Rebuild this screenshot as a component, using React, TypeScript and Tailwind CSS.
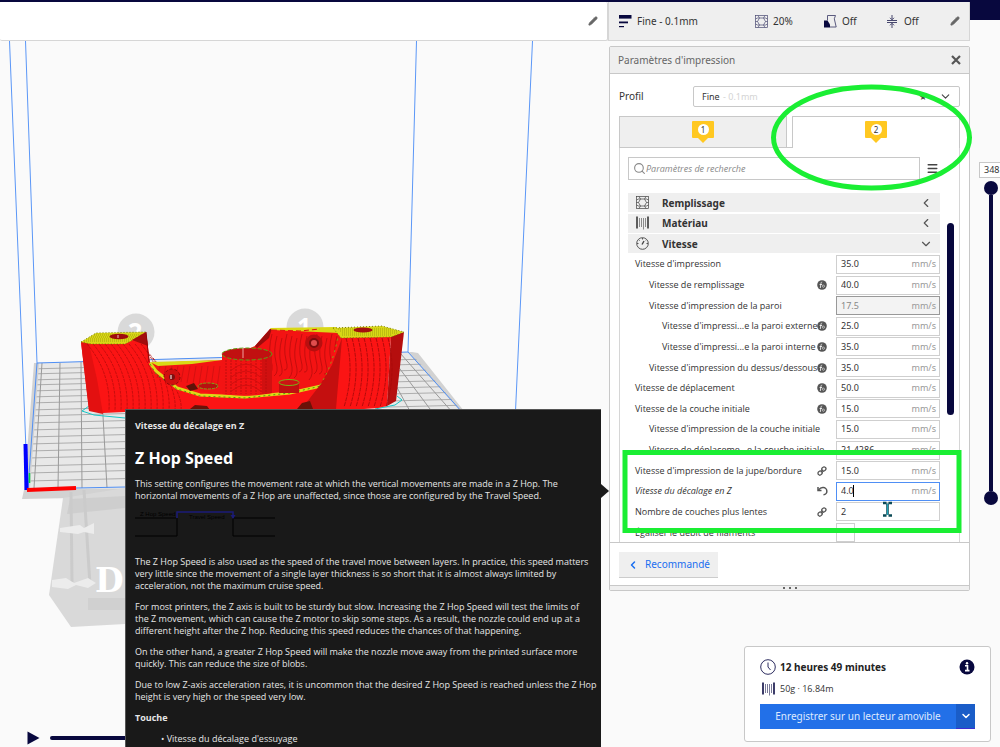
import type { ReactNode } from "react";
import { ChevronDown, ChevronLeft, Menu, Pencil, Search } from "lucide-react";

type Setting = {
  label: string;
  value: string;
  level?: number;
  icon?: "fx" | "link" | "reset";
  unit?: string;
  disabled?: boolean;
  active?: boolean;
};

const settings: Setting[] = [
  { label: "Vitesse d'impression", value: "35.0", unit: "mm/s" },
  { label: "Vitesse de remplissage", value: "40.0", unit: "mm/s", level: 1, icon: "fx" },
  { label: "Vitesse d'impression de la paroi", value: "17.5", unit: "mm/s", level: 1, disabled: true },
  { label: "Vitesse d'impressi...e la paroi externe", value: "25.0", unit: "mm/s", level: 2, icon: "fx" },
  { label: "Vitesse d'impressi...e la paroi interne", value: "35.0", unit: "mm/s", level: 2, icon: "fx" },
  { label: "Vitesse d'impression du dessus/dessous", value: "35.0", unit: "mm/s", level: 1, icon: "fx" },
  { label: "Vitesse de déplacement", value: "50.0", unit: "mm/s", icon: "fx" },
  { label: "Vitesse de la couche initiale", value: "15.0", unit: "mm/s", icon: "fx" },
  { label: "Vitesse d'impression de la couche initiale", value: "15.0", unit: "mm/s", level: 1 },
  { label: "Vitesse de déplaceme...e la couche initiale", value: "21.4286", unit: "mm/s", level: 1 },
  { label: "Vitesse d'impression de la jupe/bordure", value: "15.0", unit: "mm/s", icon: "link" },
  { label: "Vitesse du décalage en Z", value: "4.0", unit: "mm/s", icon: "reset", active: true },
  { label: "Nombre de couches plus lentes", value: "2", icon: "link" },
];

const indents = ["pl-[7px]", "pl-[21px]", "pl-[34px]"];

function InfillIcon() {
  return (
    <svg width="13" height="13" viewBox="0 0 13 13" fill="none" stroke="currentColor" strokeWidth="0.7">
      <rect x="0.5" y="0.5" width="12" height="12" />
      <path d="M4.500 3h4L10.500 6.500 8.500 10h-4L2.500 6.500zM4.500 3L3 .5M8.500 3L10 .5M4.500 10L3 12.500M8.500 10l1.500 2.500M.5 4l2-1 2 0M12.500 4l-2-1h-2M.5 9l2 1h2M12.500 9l-2 1h-2M2.500 6.500H.5M10.500 6.500h2" />
    </svg>
  );
}

function SpoolIcon() {
  return (
    <svg width="13" height="14" viewBox="0 0 13 14" fill="none" stroke="currentColor">
      <path d="M1 0.500v12M12 0.500v12" strokeWidth="1.700" />
      <path d="M3.500 2v9M5.500 2v9M7.500 2v11.500M9.500 2v9" strokeWidth="0.900" opacity="0.650" />
    </svg>
  );
}

function GaugeIcon() {
  return (
    <svg width="13" height="13" viewBox="0 0 13 13" fill="none" stroke="currentColor" strokeWidth="0.9">
      <circle cx="6.500" cy="6.500" r="5.800" />
      <path d="M6.500 1v1.500M1 6.500h1.500M12 6.500h-1.500M2.800 2.800l.8.8M10.200 2.800l-.5.5" />
      <path d="M6 7.500L8 4" strokeWidth="1.400" />
    </svg>
  );
}

function LayersIcon() {
  return (
    <svg width="13" height="13" viewBox="0 0 13 13" fill="#08083e">
      <rect width="12.500" height="3.600" />
      <rect y="6.500" width="9" height="1.800" />
      <rect y="11" width="5" height="1.200" />
    </svg>
  );
}

function SupportIcon() {
  return (
    <svg width="13" height="13" viewBox="0 0 13 13">
      <path d="M0 5.500h3.500l2.500 4v3H0z" fill="#08083e" />
      <path d="M3.500 5.500V.5h8L10.300 3.800l1.900 8.200H6" fill="none" stroke="#4a4a72" strokeWidth="0.900" />
    </svg>
  );
}

function AdhesionIcon() {
  return (
    <svg width="12" height="13" viewBox="0 0 12 13" fill="none" stroke="#33335f" strokeWidth="0.9">
      <path d="M1 5.500h10M1 7.500h10M6 0v4.500M6 13V8.500M4 2.800l2 2 2-2M4 10.300l2-2 2 2" />
    </svg>
  );
}

function FxIcon() {
  return (
    <svg width="10" height="10" viewBox="0 0 10 10" fill="none">
      <circle cx="5" cy="5" r="4.800" fill="#555" />
      <path d="M5.200 2c-1 0-1.200.8-1.300 1.800L3.300 8M2.600 4.500h2.500" stroke="#fff" strokeWidth="0.800" />
      <circle cx="6.400" cy="6.200" r="1.100" stroke="#ddd" strokeWidth="0.700" />
    </svg>
  );
}

function LinkIcon() {
  return (
    <svg width="10" height="10" viewBox="0 0 10 10" fill="none" stroke="#555" strokeWidth="1.300">
      <rect x="5" y="0.800" width="3.600" height="4.400" rx="1.700" transform="rotate(45 6.800 3)" />
      <rect x="1.300" y="4.800" width="3.600" height="4.400" rx="1.700" transform="rotate(45 3.100 7)" />
      <path d="M3.800 6.200l2.400-2.400" />
    </svg>
  );
}

function ResetIcon() {
  return (
    <svg width="11" height="10" viewBox="0 0 11 10" fill="none" stroke="#555" strokeWidth="1.500">
      <path d="M1 1v3.500h3.500" />
      <path d="M1.500 4Q3.500 1.500 6 1.600A3.600 3.600 0 0 1 6.500 8.800" />
    </svg>
  );
}

function Extruder({ n }: { n: number }) {
  return (
    <span className="flex flex-col items-center">
      <span className="flex h-[17px] w-[22px] items-center justify-center rounded-[1px] bg-[#ffc821]">
        <span className="flex size-[11px] items-center justify-center rounded-full bg-white text-[8px] leading-[11px] text-[#333]">
          {n}
        </span>
      </span>
      <svg width="10" height="5" viewBox="0 0 10 5">
        <path d="M0 0h10L5 5z" fill="#ffc821" />
      </svg>
    </span>
  );
}

function Category({ icon, title, open }: { icon: ReactNode; title: string; open?: boolean }) {
  return (
    <button className="flex h-[19px] w-full shrink-0 items-center bg-[#efefef] pr-[7px] pl-2 text-[#444]">
      {icon}
      <span className="ml-[13px] flex-1 text-left text-[10px] font-bold text-[#333]">{title}</span>
      {open ? <ChevronDown size={14} color="#555" /> : <ChevronLeft size={14} color="#555" />}
    </button>
  );
}

function SettingRow({ s, id }: { s: Setting; id: string }) {
  const box = s.active
    ? "border-[#4f8ff5] bg-white"
    : s.disabled
      ? "border-[#999] bg-[#f3f3f3]"
      : "border-[#cfcfcf] bg-white";
  return (
    <div className={`flex h-[19px] shrink-0 items-center ${indents[s.level ?? 0]}`}>
      <label
        htmlFor={id}
        className={`w-0 flex-1 font-['Open_Sans',sans-serif] whitespace-nowrap text-[#333] ${s.active ? "italic" : ""}`}
      >
        {s.label}
      </label>
      <span className="mr-2 flex w-[12px] justify-center">
        {s.icon === "fx" && <FxIcon />}
        {s.icon === "link" && <LinkIcon />}
        {s.icon === "reset" && <ResetIcon />}
      </span>
      <span className={`relative flex h-[19px] w-[104px] shrink-0 items-center border pr-[3px] pl-1 ${box}`}>
        <input
          id={id}
          defaultValue={s.value}
          disabled={s.disabled}
          className={`w-0 min-w-0 flex-1 bg-transparent outline-none ${s.disabled ? "text-[#888]" : "text-[#333]"}`}
        />
        <span className="text-[#999]">{s.unit}</span>
        {s.active && <span className="absolute left-4 h-3 w-px bg-black" />}
      </span>
    </div>
  );
}

// Perspective build plate with the sliced parts on it
function Scene() {
  const rows = [369, 374, 380, 385, 391, 397, 403, 410, 416, 423, 430, 437, 444, 451, 458, 466, 473, 481];
  return (
    <svg className="absolute top-0 left-0" width="608" height="747" viewBox="0 0 608 747" fill="none">
      <clipPath id="plate">
        <path d="M39 363L410 352l50 57v76L30 489z" />
      </clipPath>
      <path d="M34 363L412 352l6 1 46 58v80l-340 6-102 2 2-9z" fill="#d2d2d2" />
      <path d="M39 363L408 352l52 59v76L30 489z" fill="#e8e8e8" />
      <path d="M63 498L49 595l22 32 54-3V488z" fill="#d9d9d9" />
      <path d="M70 499l55-3v12l-58 6z" fill="#cecece" />
      <path d="M71 492l1 90M84 490l6 95" stroke="#cbcbcb" strokeWidth="3" />
      <path d="M88 598h37v12H88z" fill="#d0d0d0" />
      <path d="M60 528l20-3 4 3 10-5v11l-10-2-6 2-18-2zM52 580l14-2 8 5 14-5 8 5-8 5-12-3-8 4-16-2z" fill="#ececec" />
      <text x="95" y="592" fill="#fff" fontFamily="DejaVu Serif" fontWeight="bold" fontSize="33">
        D
      </text>

      <g clipPath="url(#plate)">
        {rows.map((y) => (
          <path key={y} d={`M28 ${y}L470 ${y - 11}`} stroke="#a6a6a6" strokeWidth="0.9" />
        ))}
        <path
          d="M42 363L34 488M60 363L58 488M81 362l1 126M100 362l7 126M378 353l33 60M388 353l45 60M400 353l53 60"
          stroke="#999"
        />
      </g>
      <path d="M37 363L408 352l54 60M37 363L28 489l97-2" stroke="#4f8ff5" />
      <path d="M9.500 41L20 300l6 150M25.500 41l11.500 322M416.500 41l-8.500 311M532.500 41L515.500 411" stroke="#5b97f7" />
      <path d="M25.500 444l1 46" stroke="#00f" strokeWidth="4" />
      <path d="M29.500 473v10" stroke="#00d23c" strokeWidth="1.500" />
      <path d="M27 490l49-2" stroke="red" strokeWidth="4" />

      <g fill="#d9d9d9" fontFamily="Noto Sans" fontWeight="bold" fontSize="25">
        <circle cx="136" cy="332" r="18.500" />
        <text x="128" y="341" fill="#fff">
          2
        </text>
        <circle cx="305" cy="327" r="18.500" />
        <text x="297" y="336" fill="#fff">
          1
        </text>
      </g>

      <path d="M89 406l-7 5 12 4 31 3M375 409l20-4 7-5-5-4" stroke="#19c5c5" />

      {/* left part */}
      <path d="M81 342L146 333l4 29 9 12 30 15 50 6 60-6 36-5v27H125v1l-22 1-14-3z" fill="#fb1414" />
      <path d="M81 342l8 69 14 3-6-35-8-35z" fill="#e31010" />
      {Array.from({ length: 13 }, (_, i) => (
        <path
          key={i}
          d={`M${87 + i * 6} ${344 + (i > 9 ? (i - 9) * 7 : 0)}q${24} 28 ${22} ${66 - (i > 9 ? (i - 9) * 7 : 0)}`}
          stroke="#b50b0b"
          strokeWidth="0.8"
          strokeDasharray="3 1"
        />
      ))}
      <path d="M81 342l15-9 50-1-13 8-8 4H91z" fill="#d8d616" />
      <path d="M84 341h45M88 339h45M91 337h45M94 335h48" stroke="#a3a30c" strokeDasharray="1 1" />
      <path d="M81 342l15-9 50-1-13 8-8 4H91z" stroke="#7a7d0a" strokeDasharray="1 2" />
      <ellipse cx="119" cy="336.500" rx="9.500" ry="2.800" fill="#a00c0c" />
      <path d="M118 335v3" stroke="#f3c0c0" />
      <path d="M132 340l14-8 2 14z" fill="#a30d0d" />
      <path d="M146 332l3 30" stroke="#8e0b0b" />

      {/* middle body */}
      <path d="M150 363l72-3 33-14 15-17h70v48l-20 10-60 7-50-1-32-6-24-14z" fill="#f31313" />
      <path d="M255 346l15-17 2-1-3 10-12 10z" fill="#9c0c0c" />
      {Array.from({ length: 14 }, (_, i) => (
        <path
          key={i}
          d={`M${272 + i * 5} ${334 + (i % 3) * 2}q-4 15 ${-1} 26t-2 ${16 - (i % 4) * 2}`}
          stroke="#b80d0d"
          strokeWidth="0.8"
        />
      ))}
      {Array.from({ length: 11 }, (_, i) => (
        <path key={i} d={`M${160 + i * 6} ${366}l${-3} ${12 + i}`} stroke="#c51010" strokeWidth="0.7" />
      ))}
      <path d="M150 362l72-2-30 4-34 2z" fill="#d9d816" />
      <path d="M150 363l6 8 21 17 23 7 45 2 45-4 31-7" stroke="#ded917" strokeWidth="3" />
      <path d="M150 364l6 10 21 15 23 7 45 2 45-5 31-7" stroke="#4f9a12" strokeDasharray="2 3" />
      <path d="M270 328l66-1 3 6-67-3z" fill="#d9d816" />
      <path d="M272 330l28 1 20-2" stroke="#d11" strokeDasharray="5 3" />
      <circle cx="172" cy="377" r="8" fill="#d10f0f" stroke="#8c0a0a" strokeDasharray="3 2" />
      <circle cx="172" cy="377" r="3" fill="#7d1010" />
      <path d="M171 375v4" stroke="#fff" />
      <ellipse cx="208" cy="386" rx="10" ry="3" fill="#b81010" stroke="#79a814" strokeDasharray="3 1" />
      <path d="M186 386l8-3 4 6-8 2z" fill="#5e1208" />
      <path d="M279 382v11h20v-11z" fill="#bf1010" />
      <ellipse cx="289" cy="382.500" rx="10" ry="3" fill="#cd1313" stroke="#79b414" />
      <circle cx="314" cy="343" r="8.500" fill="#b80f0f" />
      <circle cx="314" cy="343" r="4" fill="#e04d4d" stroke="#7c0c0c" strokeWidth="2" />

      {/* cylinder */}
      <path d="M222 354v40q25 4 50-1v-39z" fill="#f21313" />
      <path d="M262 358v36l10-1v-39z" fill="#d11010" />
      {Array.from({ length: 9 }, (_, i) => (
        <path key={i} d={`M${226 + i * 5} 360V394`} stroke="#b30c0c" strokeWidth="0.8" strokeDasharray="2 1" />
      ))}
      {[366, 373, 380, 387].map((y) => (
        <path key={y} d={`M230 ${y + 5}q16 -14 32 0`} stroke="#c90e0e" strokeWidth="0.8" />
      ))}
      <ellipse cx="247" cy="354" rx="25" ry="6" fill="#c11010" stroke="#5aa312" strokeDasharray="4 2" />
      <path d="M243 348v10" stroke="#f0a0a0" />

      {/* right part */}
      <path d="M340 337l51-1-4 70-9 2-42 3h-39l25-26z" fill="#fb1414" />
      <path d="M342 338l-6 71-36 2 20-26 12-20z" fill="#c40f0f" />
      <path d="M391 336l13-4-8 69-9 5z" fill="#b50e0e" />
      {Array.from({ length: 8 }, (_, i) => (
        <path
          key={i}
          d={`M${346 + i * 6} 338q9 34 ${-2} 69`}
          stroke="#a80a0a"
          strokeWidth="0.9"
          strokeDasharray="4 1"
        />
      ))}
      <path d="M320 385q12-18 18-48" stroke="#88a915" strokeDasharray="2 4" />
      <path d="M333 328l49-2 22 6-13 5-50 1z" fill="#d8d616" />
      <path d="M338 329h54M340 331h58M342 333h56M342 335h50" stroke="#a3a30c" strokeDasharray="1 1" />
      <path d="M333 328l49-2 22 6-13 5-50 1z" stroke="#7a7d0a" strokeDasharray="1 2" />
      <ellipse cx="363" cy="330" rx="9.500" ry="2.500" fill="#a40e0e" />
      <path d="M190 409l5-4 12 1 3 4zM297 409l5-6 8-2 3 8z" fill="#6a1208" />
    </svg>
  );
}

function Tooltip() {
  return (
    <div
      role="tooltip"
      className="absolute top-[409px] bottom-0 left-[125px] z-20 w-[476px] border-t border-l border-[#555] bg-[#191919] pt-2.5 pl-[9px] font-['Open_Sans',sans-serif] text-[9px] leading-3 text-[#e6e6e6]"
    >
      <svg className="absolute top-[74px] -right-2" width="8" height="14" viewBox="0 0 8 14">
        <path d="M0 0l8 7-8 7z" fill="#191919" />
      </svg>
      <p className="font-bold">Vitesse du décalage en Z</p>
      <h1 className="mt-3.5 font-['Noto_Sans',sans-serif] text-[16px] leading-6 font-bold text-white">Z Hop Speed</h1>
      <p className="mt-2">
        This setting configures the movement rate at which the vertical movements are made in a Z Hop. The
        <br />
        horizontal movements of a Z Hop are unaffected, since those are configured by the Travel Speed.
      </p>
      <svg className="mt-2" width="140" height="46" viewBox="0 0 140 46" fill="none">
        <path d="M0 8h41M0 26h42V8M98 8h42M98 8v18h42" stroke="#000" />
        <path d="M42 8V2h56v6" stroke="#1b1b78" strokeWidth="1.500" />
        <path d="M95.500 5h5L98 9z" fill="#1b1b78" />
        <g fill="#000" fontFamily="Liberation Sans" fontSize="6">
          <text x="5" y="6">
            Z Hop Speed
          </text>
          <text x="54" y="9">
            Travel Speed
          </text>
        </g>
      </svg>
      <div className="flex flex-col gap-[9px]">
        <p>
          The Z Hop Speed is also used as the speed of the travel move between layers. In practice, this speed matters
          <br />
          very little since the movement of a single layer thickness is so short that it is almost always limited by
          <br />
          acceleration, not the maximum cruise speed.
        </p>
        <p>
          For most printers, the Z axis is built to be sturdy but slow. Increasing the Z Hop Speed will test the limits of
          <br />
          the Z movement, which can cause the Z motor to skip some steps. As a result, the nozzle could end up at a
          <br />
          different height after the Z hop. Reducing this speed reduces the chances of that happening.
        </p>
        <p>
          On the other hand, a greater Z Hop Speed will make the nozzle move away from the printed surface more
          <br />
          quickly. This can reduce the size of blobs.
        </p>
        <p>
          Due to low Z-axis acceleration rates, it is uncommon that the desired Z Hop Speed is reached unless the Z Hop
          <br />
          height is very high or the speed very low.
        </p>
        <p className="font-bold">Touche</p>
        <ul className="pl-[26px]">
          <li>• Vitesse du décalage d'essuyage</li>
        </ul>
      </div>
    </div>
  );
}

function PrintSettings() {
  return (
    <section className="mt-[5px] ml-px rounded-[2px] border border-[#c8c8c8] bg-white">
      <header className="flex h-[27px] items-center justify-between border-b border-[#c8c8c8] bg-[#efefef] pr-2 pl-2">
        <h2 className="text-[10px] text-[#666]">Paramètres d'impression</h2>
        <button aria-label="Fermer">
          <svg width="10" height="10" viewBox="0 0 10 10" stroke="#555" strokeWidth="2.200">
            <path d="M1 1l8 8M9 1L1 9" />
          </svg>
        </button>
      </header>

      <div className="px-[9px] pt-3">
        <div className="flex h-[21px] items-center">
          <label htmlFor="profile" className="w-[74px] text-[10px] text-[#333]">
            Profil
          </label>
          <div className="relative flex h-[21px] flex-1 items-center rounded-[2px] border border-[#c8c8c8]">
            <select id="profile" className="h-full w-full appearance-none bg-transparent pl-2 text-[9px] text-[#333] outline-none">
              <option>Fine</option>
            </select>
            <span className="pointer-events-none absolute left-[29px] text-[9px] text-[#d4d4d4]">- 0.1mm</span>
            <span className="pointer-events-none absolute right-[7px] flex items-center gap-3 text-[#444]">
              <span className="text-[9px]">★</span>
              <ChevronDown size={13} />
            </span>
          </div>
        </div>

        <div className="mt-[9px] flex h-8">
          <button aria-label="Extrudeuse 1" className="flex flex-1 justify-center border border-[#c8c8c8] bg-[#efefef] pt-1">
            <Extruder n={1} />
          </button>
          <span className="w-[5px] border-b border-[#c8c8c8]" />
          <button aria-label="Extrudeuse 2" className="flex flex-1 justify-center border border-b-0 border-[#c8c8c8] pt-1">
            <Extruder n={2} />
          </button>
        </div>

        <div className="border-x border-[#d6d6d6] pt-[9px] pl-2">
          <div className="flex items-center">
            <label className="flex h-[23px] w-[292px] items-center border border-[#c8c8c8] pl-1">
              <Search size={13} strokeWidth={2} color="#888" />
              <input
                placeholder="Paramètres de recherche"
                aria-label="Paramètres de recherche"
                className="flex-1 font-['Open_Sans',sans-serif] text-[9px] italic outline-none placeholder:text-[#888]"
              />
            </label>
            <button aria-label="Menu" className="ml-1.5">
              <Menu size={13} strokeWidth={2.500} color="#444" />
            </button>
          </div>

          <div className="mt-[13px] flex">
            <div className="flex h-[349px] w-[312px] flex-col justify-between overflow-hidden text-[9px] leading-3">
              <Category icon={<InfillIcon />} title="Remplissage" />
              <Category icon={<SpoolIcon />} title="Matériau" />
              <Category icon={<GaugeIcon />} title="Vitesse" open />
              {settings.map((s, i) => (
                <SettingRow key={s.label} s={s} id={`setting-${i}`} />
              ))}
              <div className="flex h-[19px] shrink-0 items-center pl-[7px]">
                <label htmlFor="equalize" className="flex-1 font-['Open_Sans',sans-serif] text-[#333]">
                  Égaliser le débit de filaments
                </label>
                <span className="w-[104px]">
                  <input id="equalize" type="checkbox" className="block size-[19px] appearance-none border border-[#cfcfcf]" />
                </span>
              </div>
            </div>
            <div className="mt-[30px] ml-[7px] h-[192px] w-[7px] rounded-full bg-[#08083e]" />
          </div>
        </div>
      </div>

      <footer className="border-t border-[#c8c8c8] px-[9px] pt-[9px] pb-[7px]">
        <button className="flex h-[26px] w-[99px] items-center gap-1.5 border-b border-[#ccc] bg-[#efefef] pl-2 text-[10px] text-[#196ef0]">
          <ChevronLeft size={12} strokeWidth={3} />
          Recommandé
        </button>
      </footer>
      <div className="flex h-[5px] items-center justify-center gap-1 border-t border-[#c8c8c8] bg-[#efefef]">
        <span className="size-[2px] bg-[#666]" />
        <span className="size-[2px] bg-[#666]" />
        <span className="size-[2px] bg-[#666]" />
      </div>
    </section>
  );
}

function JobCard() {
  return (
    <section className="mt-auto mr-[9px] mb-[5px] flex w-[247px] flex-col self-end rounded-[3px] border border-[#c8c8c8] bg-white px-[15px] pt-3 pb-3">
      <div className="flex items-center">
        <svg width="16" height="16" viewBox="0 0 16 16" fill="none" stroke="#2d2d60">
          <circle cx="8" cy="8" r="7.300" />
          <path d="M8 3.500V8l2.500 3" />
        </svg>
        <span className="ml-1 flex-1 text-[10px] leading-4 font-bold text-[#222]">12 heures 49 minutes</span>
        <svg width="16" height="16" viewBox="0 0 16 16" fill="none">
          <circle cx="8" cy="8" r="7.500" fill="#08083e" />
          <path d="M6 6.800h2.500v4.500M6 11.600h4.500" stroke="#fff" strokeWidth="1.600" />
          <circle cx="8" cy="4.200" r="1.200" fill="#fff" />
        </svg>
      </div>
      <div className="mt-1.5 flex items-center gap-[5px] pl-[2px] font-['Open_Sans',sans-serif] text-[9px] leading-4 text-[#333]">
        <span className="text-[#1c1c50]">
          <SpoolIcon />
        </span>
        50g · 16.84m
      </div>
      <div className="mt-[7px] flex h-[25px] text-[10px] text-[#dfeaff]">
        <button className="flex-1 bg-[#2270e8]">Enregistrer sur un lecteur amovible</button>
        <button aria-label="Autres options" className="flex w-[19px] items-center justify-center border-b border-[#3d2fd0] bg-[#1a5dc8]">
          <ChevronDown size={12} strokeWidth={3} color="#fff" />
        </button>
      </div>
    </section>
  );
}

export default function App() {
  return (
    <div className="relative flex h-screen flex-col overflow-hidden bg-[#fafafa] font-['Noto_Sans',sans-serif]">
      <Scene />
      <div className="z-10 h-[2px] shrink-0 bg-[#08083e]" />

      <div className="z-10 flex flex-1">
        <main className="flex flex-1 flex-col justify-between">
          <div className="flex h-[39px] items-center justify-end rounded-[2px] border-r border-b border-[#d6d6d6] bg-white pr-[9px]">
            <button aria-label="Modifier">
              <Pencil size={10} fill="#666" color="#666" />
            </button>
          </div>
          <div className="flex h-[18px] items-center pl-[27px]">
            <button aria-label="Lecture">
              <svg width="13" height="14" viewBox="0 0 13 14">
                <path d="M0.500 0.500L12.500 7l-12 6.500z" fill="#08083e" />
              </svg>
            </button>
            <div className="ml-2.5 h-1 flex-1 rounded-full bg-[#08083e]" />
            <div className="w-20" />
          </div>
        </main>

        <aside className="flex w-[392px] flex-col">
          <div className="flex">
            <div className="w-[362px]">
              <div className="flex h-[39px] items-center border border-t-0 border-[#d6d6d6] bg-[#efefef] pr-[9px] pl-2.5 text-[10px] text-[#333]">
                <span className="flex w-[136px] items-center gap-[5px]">
                  <LayersIcon />
                  Fine - 0.1mm
                </span>
                <span className="flex w-[69px] items-center gap-[5px]">
                  <span className="text-[#4a4a72]">
                    <InfillIcon />
                  </span>
                  20%
                </span>
                <span className="flex w-[62px] items-center gap-[5px]">
                  <SupportIcon />
                  Off
                </span>
                <span className="flex flex-1 items-center gap-1.5">
                  <AdhesionIcon />
                  Off
                </span>
                <button aria-label="Modifier les paramètres">
                  <Pencil size={10} fill="#666" color="#666" />
                </button>
              </div>
              <PrintSettings />
            </div>

            <div className="flex w-[30px] flex-col">
              <div className="h-[18px] bg-[#08083e]" />
              <div className="mt-[142px] ml-[9px] h-4 overflow-hidden border border-r-0 border-[#c8c8c8] bg-white pl-1 text-[9px] leading-[14px] text-[#333]">
                348
              </div>
              <div className="mt-[3px] ml-3.5 flex flex-col items-center self-start">
                <span className="size-[14px] rounded-full bg-[#08083e]" />
                <span className="h-[296px] w-1 bg-[#08083e]" />
                <span className="size-[14px] rounded-full bg-[#08083e]" />
              </div>
            </div>
          </div>
          <JobCard />
        </aside>
      </div>

      <Tooltip />

      {/* hand-made highlights and the mouse pointer */}
      <svg className="pointer-events-none absolute top-0 right-0 z-30" width="392" height="747" viewBox="608 0 392 747" fill="none">
        <ellipse cx="871.500" cy="137.500" rx="98" ry="50.500" stroke="#1aee33" strokeWidth="5" />
        <rect x="625" y="452.500" width="334" height="78" stroke="#1aee33" strokeWidth="5" />
        <path d="M883 503h3.500M888.500 503h3.500M887.500 503.500v11M883 515.500h3.500M888.500 515.500h3.500" stroke="#0b4a56" strokeWidth="2.500" />
        <path d="M887.500 504v11" stroke="#1fa3b5" />
      </svg>
    </div>
  );
}
